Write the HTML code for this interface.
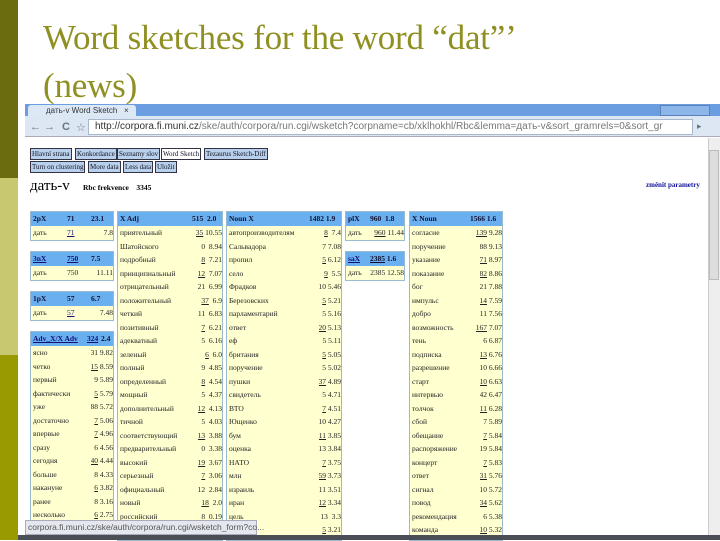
<!DOCTYPE html>
<html><head><meta charset="utf-8">
<style>
*{margin:0;padding:0;box-sizing:border-box}
body{width:720px;height:540px;position:relative;overflow:hidden;background:#fff;font-family:"Liberation Serif","Noto Serif CJK SC",serif}
.s1{position:absolute;left:0;top:0;width:18px;height:178px;background:#6b6b10}
.s2{position:absolute;left:0;top:178px;width:18px;height:177px;background:#c8c870}
.s3{position:absolute;left:0;top:355px;width:18px;height:185px;background:#999900}
.title{position:absolute;left:43px;top:14px;font-size:35px;line-height:48px;color:#8f8f22;z-index:5;letter-spacing:-0.2px}
.tabbar{position:absolute;left:25px;top:104px;width:695px;height:12px;background:#6b9ee0}
.tab{position:absolute;left:28px;top:105px;width:108px;height:12px;background:#dce8f6;border-radius:3px 3px 0 0;font:8px "Liberation Sans",sans-serif;color:#333;padding-left:18px;line-height:12px}
.addr{position:absolute;left:25px;top:116px;width:695px;height:21px;background:#dde7f4;border-bottom:1px solid #aab}
.url{position:absolute;left:88px;top:119px;width:605px;height:16px;background:#fff;border:1px solid #a8b8cc;font:10px "Liberation Sans",sans-serif;color:#777;line-height:14px;padding-left:6px;white-space:nowrap;overflow:hidden}
.url b{color:#333;font-weight:normal}
.nav{position:absolute;top:121px;font:11px "Liberation Sans",sans-serif;color:#678}
.content{position:absolute;left:25px;top:138px;width:683px;height:382px;background:#fff}
.scroll{position:absolute;left:708px;top:138px;width:12px;height:397px;background:#eee;border-left:1px solid #ccc}
.thumb{position:absolute;left:709px;top:150px;width:10px;height:130px;background:#ddd;border:1px solid #bbb}
.btn{position:absolute;height:12px;background:#b8d0ec;border:1px solid #334;font-size:7px;line-height:10px;padding:0 1px;white-space:nowrap;color:#112}
.t{position:absolute;background:#ffffd0;border:1px solid #9bc;font-size:7.5px;color:#222}
.t .h{background:#6ab0f0;height:14px;display:flex;font-weight:bold;color:#113;line-height:14px}
.t .r{height:13.5px;display:flex;line-height:13.5px;white-space:nowrap}
.t span{display:block;overflow:hidden}
.w{flex:1;padding-left:2px}
.n{text-align:right}
.u{color:#117;text-decoration:underline}
.status{position:absolute;left:25px;top:520px;width:232px;height:15px;background:#e4e8ee;border:1px solid #aab;font:8.5px "Liberation Sans",sans-serif;color:#555;line-height:13px;padding-left:2px;white-space:nowrap}
.task{position:absolute;left:18px;top:535px;width:702px;height:5px;background:#4a4e56}
</style></head><body>
<div class="s1"></div><div class="s2"></div><div class="s3"></div>
<div class="title">Word sketches for the word “dat”’<br>(news)</div>
<div class="tabbar"></div>
<div class="tab">дать-v Word Sketch &nbsp; ×</div>
<div style="position:absolute;left:660px;top:105px;width:50px;height:11px;background:#8db6ea;border:1px solid #5a82b8"></div>
<div class="addr"></div>
<div class="nav" style="left:30px">← →</div>
<div class="nav" style="left:62px;font-weight:bold">C</div>
<div class="nav" style="left:76px">☆</div>
<div class="url"><b>http://corpora.fi.muni.cz</b>/ske/auth/corpora/run.cgi/wsketch?corpname=cb/xklhokhl/Rbc&amp;lemma=дать-v&amp;sort_gramrels=0&amp;sort_gr</div>
<div class="nav" style="left:697px;font-size:9px">▸</div>
<div class="content"></div>
<div class="scroll"></div><div class="thumb"></div>

<div class="btn" style="left:30px;top:148px">Hlavní strana</div>
<div class="btn" style="left:75px;top:148px">Konkordance</div>
<div class="btn" style="left:117px;top:148px">Seznamy slov</div>
<div class="btn" style="left:161px;top:148px;background:#fff">Word Sketch</div>
<div class="btn" style="left:204px;top:148px">Tezaurus Sketch-Diff</div>
<div class="btn" style="left:30px;top:161px">Turn on clustering</div>
<div class="btn" style="left:88px;top:161px">More data</div>
<div class="btn" style="left:123px;top:161px">Less data</div>
<div class="btn" style="left:155px;top:161px">Uložit</div>
<div style="position:absolute;left:30px;top:178px;font-size:15px">дать-v</div>
<div style="position:absolute;left:83px;top:183px;font-size:7.5px;font-weight:bold">Rbc frekvence &nbsp;&nbsp; 3345</div>
<div style="position:absolute;left:646px;top:181px;font-size:7px;color:#119;font-weight:bold">změnit parametry</div>

<div class="t" style="left:30px;top:211px;width:84px"><div class="h"><span class="w">2pX</span><span style="width:24px">71</span><span style="width:22px">23.1</span></div><div class="r"><span class="w">дать</span><span class="u" style="width:24px">71</span><span class="n" style="width:22px">7.8</span></div></div>
<div class="t" style="left:30px;top:251px;width:84px"><div class="h"><span class="w u">3nX</span><span class="u" style="width:24px">750</span><span style="width:22px">7.5</span></div><div class="r"><span class="w">дать</span><span style="width:24px">750</span><span class="n" style="width:22px">11.11</span></div></div>
<div class="t" style="left:30px;top:291px;width:84px"><div class="h"><span class="w">1pX</span><span style="width:24px">57</span><span style="width:22px">6.7</span></div><div class="r"><span class="w">дать</span><span class="u" style="width:24px">57</span><span class="n" style="width:22px">7.48</span></div></div>
<div class="t" style="left:30px;top:331px;width:84px"><div class="h"><span class="w u">Adv_X/X Adv</span><span class="u" style="width:14px">324</span><span style="width:12px">2.4</span></div>
<div class="r"><span class="w">ясно</span><span class="n">31 9.82</span></div>
<div class="r"><span class="w">четко</span><span class="n"><u>15</u> 8.59</span></div>
<div class="r"><span class="w">первый</span><span class="n">9 5.89</span></div>
<div class="r"><span class="w">фактически</span><span class="n"><u>5</u> 5.79</span></div>
<div class="r"><span class="w">уже</span><span class="n">88 5.72</span></div>
<div class="r"><span class="w">достаточно</span><span class="n"><u>7</u> 5.06</span></div>
<div class="r"><span class="w">впервые</span><span class="n"><u>7</u> 4.96</span></div>
<div class="r"><span class="w">сразу</span><span class="n">6 4.56</span></div>
<div class="r"><span class="w">сегодня</span><span class="n"><u>40</u> 4.44</span></div>
<div class="r"><span class="w">больше</span><span class="n">8 4.33</span></div>
<div class="r"><span class="w">накануне</span><span class="n"><u>6</u> 3.82</span></div>
<div class="r"><span class="w">ранее</span><span class="n">8 3.16</span></div>
<div class="r"><span class="w">несколько</span><span class="n"><u>6</u> 2.75</span></div>
</div>

<div class="t" style="left:117px;top:211px;width:106px;height:330px"><div class="h"><span class="w">X Adj</span><span style="width:30px">515 &nbsp;2.0</span></div>
<div class="r"><span class="w">приятельный</span><span class="n"><u>35</u> 10.55</span></div>
<div class="r"><span class="w">Шатойского</span><span class="n">0 &nbsp;8.94</span></div>
<div class="r"><span class="w">подробный</span><span class="n"><u>8</u> &nbsp;7.21</span></div>
<div class="r"><span class="w">принципиальный</span><span class="n"><u>12</u> &nbsp;7.07</span></div>
<div class="r"><span class="w">отрицательный</span><span class="n">21 &nbsp;6.99</span></div>
<div class="r"><span class="w">положительный</span><span class="n"><u>37</u> &nbsp;6.9</span></div>
<div class="r"><span class="w">четкий</span><span class="n">11 &nbsp;6.83</span></div>
<div class="r"><span class="w">позитивный</span><span class="n"><u>7</u> &nbsp;6.21</span></div>
<div class="r"><span class="w">адекватный</span><span class="n">5 &nbsp;6.16</span></div>
<div class="r"><span class="w">зеленый</span><span class="n"><u>6</u> &nbsp;6.0</span></div>
<div class="r"><span class="w">полный</span><span class="n">9 &nbsp;4.85</span></div>
<div class="r"><span class="w">определенный</span><span class="n"><u>8</u> &nbsp;4.54</span></div>
<div class="r"><span class="w">мощный</span><span class="n">5 &nbsp;4.37</span></div>
<div class="r"><span class="w">дополнительный</span><span class="n"><u>12</u> &nbsp;4.13</span></div>
<div class="r"><span class="w">тичной</span><span class="n">5 &nbsp;4.03</span></div>
<div class="r"><span class="w">соответствующий</span><span class="n"><u>13</u> &nbsp;3.88</span></div>
<div class="r"><span class="w">предварительный</span><span class="n">0 &nbsp;3.38</span></div>
<div class="r"><span class="w">высокий</span><span class="n"><u>19</u> &nbsp;3.67</span></div>
<div class="r"><span class="w">серьезный</span><span class="n"><u>7</u> &nbsp;3.06</span></div>
<div class="r"><span class="w">официальный</span><span class="n">12 &nbsp;2.84</span></div>
<div class="r"><span class="w">новый</span><span class="n"><u>18</u> &nbsp;2.0</span></div>
<div class="r"><span class="w">российский</span><span class="n">8 &nbsp;0.19</span></div>
</div>

<div class="t" style="left:226px;top:211px;width:116px;height:330px"><div class="h"><span class="w">Noun X</span><span style="width:32px">1482 1.9</span></div>
<div class="r"><span class="w">автопроизводителям</span><span class="n"><u>8</u> &nbsp;7.4</span></div>
<div class="r"><span class="w">Сальвадора</span><span class="n">7 7.08</span></div>
<div class="r"><span class="w">пропил</span><span class="n"><u>5</u> 6.12</span></div>
<div class="r"><span class="w">село</span><span class="n"><u>9</u> &nbsp;5.5</span></div>
<div class="r"><span class="w">Фрадков</span><span class="n">10 5.46</span></div>
<div class="r"><span class="w">Березовских</span><span class="n"><u>5</u> 5.21</span></div>
<div class="r"><span class="w">парламентарий</span><span class="n">5 5.16</span></div>
<div class="r"><span class="w">ответ</span><span class="n"><u>20</u> 5.13</span></div>
<div class="r"><span class="w">еф</span><span class="n">5 5.11</span></div>
<div class="r"><span class="w">британия</span><span class="n"><u>5</u> 5.05</span></div>
<div class="r"><span class="w">поручение</span><span class="n">5 5.02</span></div>
<div class="r"><span class="w">пушки</span><span class="n"><u>37</u> 4.89</span></div>
<div class="r"><span class="w">свидетель</span><span class="n">5 4.71</span></div>
<div class="r"><span class="w">ВТО</span><span class="n"><u>7</u> 4.51</span></div>
<div class="r"><span class="w">Ющенко</span><span class="n">10 4.27</span></div>
<div class="r"><span class="w">бум</span><span class="n"><u>11</u> 3.85</span></div>
<div class="r"><span class="w">оценка</span><span class="n">13 3.84</span></div>
<div class="r"><span class="w">НАТО</span><span class="n"><u>7</u> 3.75</span></div>
<div class="r"><span class="w">млн</span><span class="n"><u>59</u> 3.73</span></div>
<div class="r"><span class="w">израиль</span><span class="n">11 3.51</span></div>
<div class="r"><span class="w">иран</span><span class="n"><u>12</u> 3.34</span></div>
<div class="r"><span class="w">цель</span><span class="n">13 &nbsp;3.3</span></div>
<div class="r"><span class="w">жизнь</span><span class="n"><u>5</u> 3.21</span></div>
</div>

<div class="t" style="left:345px;top:211px;width:60px"><div class="h"><span class="w">plX</span><span style="width:34px">960 &nbsp;1.8</span></div><div class="r"><span class="w">дать</span><span class="n"><u>960</u> 11.44</span></div></div>
<div class="t" style="left:345px;top:251px;width:60px"><div class="h"><span class="w u">saX</span><span style="width:34px"><u>2385</u> 1.6</span></div><div class="r"><span class="w">дать</span><span class="n">2385 12.58</span></div></div>

<div class="t" style="left:409px;top:211px;width:94px;height:330px"><div class="h"><span class="w">X Noun</span><span style="width:32px">1566 1.6</span></div>
<div class="r"><span class="w">согласие</span><span class="n"><u>139</u> 9.28</span></div>
<div class="r"><span class="w">поручение</span><span class="n">88 9.13</span></div>
<div class="r"><span class="w">указание</span><span class="n"><u>71</u> 8.97</span></div>
<div class="r"><span class="w">показание</span><span class="n"><u>82</u> 8.86</span></div>
<div class="r"><span class="w">бог</span><span class="n">21 7.88</span></div>
<div class="r"><span class="w">импульс</span><span class="n"><u>14</u> 7.59</span></div>
<div class="r"><span class="w">добро</span><span class="n">11 7.56</span></div>
<div class="r"><span class="w">возможность</span><span class="n"><u>167</u> 7.07</span></div>
<div class="r"><span class="w">тень</span><span class="n">6 6.87</span></div>
<div class="r"><span class="w">подписка</span><span class="n"><u>13</u> 6.76</span></div>
<div class="r"><span class="w">разрешение</span><span class="n">10 6.66</span></div>
<div class="r"><span class="w">старт</span><span class="n"><u>10</u> 6.63</span></div>
<div class="r"><span class="w">интервью</span><span class="n">42 6.47</span></div>
<div class="r"><span class="w">толчок</span><span class="n"><u>11</u> 6.28</span></div>
<div class="r"><span class="w">сбой</span><span class="n">7 5.89</span></div>
<div class="r"><span class="w">обещание</span><span class="n"><u>7</u> 5.84</span></div>
<div class="r"><span class="w">распоряжение</span><span class="n">19 5.84</span></div>
<div class="r"><span class="w">концерт</span><span class="n"><u>7</u> 5.83</span></div>
<div class="r"><span class="w">ответ</span><span class="n"><u>31</u> 5.76</span></div>
<div class="r"><span class="w">сигнал</span><span class="n">10 5.72</span></div>
<div class="r"><span class="w">повод</span><span class="n"><u>34</u> 5.62</span></div>
<div class="r"><span class="w">рекомендация</span><span class="n">6 5.38</span></div>
<div class="r"><span class="w">команда</span><span class="n"><u>10</u> 5.32</span></div>
</div>

<div class="status">corpora.fi.muni.cz/ske/auth/corpora/run.cgi/wsketch_form?co...</div>
<div class="task"></div>
</body></html>
